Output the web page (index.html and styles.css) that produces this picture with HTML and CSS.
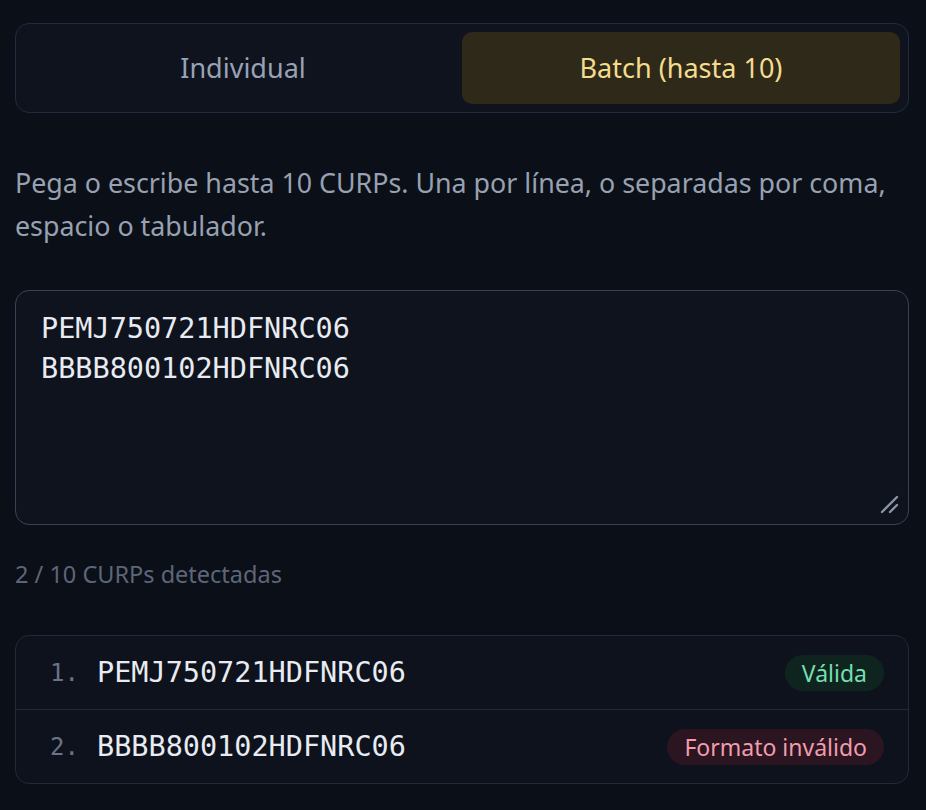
FILE: index.html
```html
<!DOCTYPE html>
<html lang="es">
<head>
<meta charset="utf-8">
<title>CURP Batch</title>
<link rel="stylesheet" href="styles.css">
</head>
<body>
<main class="page">
  <div class="tabs">
    <button class="tab">Individual</button>
    <button class="tab tab-active">Batch (hasta 10)</button>
  </div>
  <p class="hint">Pega o escribe hasta 10 CURPs. Una por línea, o separadas por coma, espacio o tabulador.</p>
  <div class="field">
    <textarea class="input" spellcheck="false">PEMJ750721HDFNRC06
BBBB800102HDFNRC06</textarea>
    <svg class="grip" width="20" height="20" viewBox="0 0 20 20" aria-hidden="true"><path d="M3 17 L18 2 M11 17 L18 10" stroke="#8b93a5" stroke-width="2.4" stroke-linecap="round" fill="none"/></svg>
  </div>
  <div class="count">2 / 10 CURPs detectadas</div>
  <ol class="list">
    <li class="row"><span class="num">1.</span><span class="curp">PEMJ750721HDFNRC06</span><span class="badge badge-ok">Válida</span></li>
    <li class="row"><span class="num">2.</span><span class="curp">BBBB800102HDFNRC06</span><span class="badge badge-bad">Formato inválido</span></li>
  </ol>
</main>
</body>
</html>
```

FILE: styles.css
```css
html, body {
  margin: 0;
  background: #0b0f17;
  color-scheme: dark;
}
.page {
  padding: 23px 17px 0 15px;
  font-family: "Noto Sans", "Open Sans", sans-serif;
}
.tabs {
  display: grid;
  grid-template-columns: 1fr 1fr;
  padding: 8px;
  border: 1px solid #242a40;
  border-radius: 14px;
  background: #0e131e;
}
.tab {
  height: 72px;
  padding-bottom: 3px;
  border: 0;
  border-radius: 10px;
  background: transparent;
  color: #98a2b5;
  font-family: inherit;
  font-size: 27px;
}
.tab-active {
  background: #2f291a;
  color: #f5dc8c;
}
.hint {
  margin: 48px 0 43px;
  color: #98a1b2;
  font-size: 26.8px;
  line-height: 43px;
}
.field {
  position: relative;
}
.input {
  display: block;
  box-sizing: border-box;
  width: 100%;
  height: 235px;
  margin: 0;
  padding: 18px 25px;
  border: 1px solid #3a4257;
  border-radius: 14px;
  background: #0e131e;
  color: #e8ebf1;
  font-family: "DejaVu Sans Mono", monospace;
  font-size: 28.5px;
  line-height: 40px;
  resize: none;
  outline: none;
}
.grip {
  position: absolute;
  right: 10px;
  bottom: 10px;
}
.count {
  margin-top: 34px;
  color: #5d6678;
  font-size: 23.5px;
  line-height: 30px;
}
.list {
  list-style: none;
  margin: 46px 0 0;
  padding: 0;
  border: 1px solid #232939;
  border-radius: 14px;
  background: #0d121c;
}
.row {
  display: flex;
  align-items: center;
  height: 73px;
  padding: 0 24px 0 34px;
}
.row + .row {
  border-top: 1px solid #232939;
}
.num {
  width: 47px;
  color: #6a7386;
  font-family: "DejaVu Sans Mono", monospace;
  font-size: 24px;
}
.curp {
  flex: 1;
  color: #e8ebf1;
  font-family: "DejaVu Sans Mono", monospace;
  font-size: 28.5px;
}
.badge {
  height: 36px;
  line-height: 36px;
  padding: 0 17px;
  border-radius: 18px;
  font-size: 23px;
}
.badge-ok {
  background: #10241f;
  color: #74dfb0;
}
.badge-bad {
  background: #2a1520;
  color: #f19cae;
}
```
